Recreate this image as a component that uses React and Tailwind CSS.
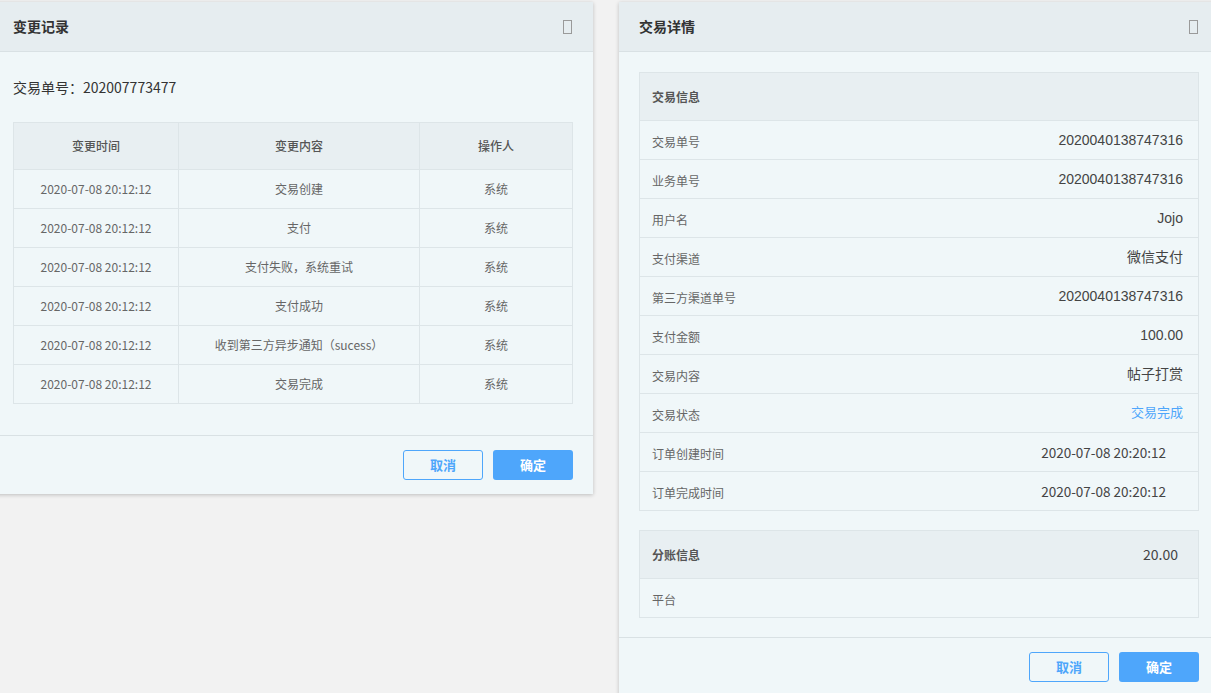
import React from "react";

const FONT = { fontFamily: '"Noto Sans CJK SC", "Liberation Sans", sans-serif' };

function CloseIcon() {
  return <div className="w-[9px] h-[14px] border border-[#9a9a9a]" />;
}

function Header({ title }) {
  return (
    <div className="h-[50px] flex items-center justify-between pl-[20px] pr-[21px] bg-[#e6edf0] border-b border-[#d9e1e4]">
      <span className="text-[14px] font-bold text-[#333]">{title}</span>
      <CloseIcon />
    </div>
  );
}

function Footer() {
  return (
    <div className="border-t border-[#d9e1e4] flex justify-end gap-[10px] pt-[14px] pb-[14px] pr-[20px]">
      <button className="w-[80px] h-[30px] rounded-[3px] border border-[#4ea6fb] text-[#4ea6fb] text-[13px] font-bold bg-[#f0f7f9]">取消</button>
      <button className="w-[80px] h-[30px] rounded-[3px] bg-[#4ea6fb] text-white text-[13px] font-bold">确定</button>
    </div>
  );
}

const records = [
  "交易创建",
  "支付",
  "支付失败，系统重试",
  "支付成功",
  "收到第三方异步通知（sucess）",
  "交易完成",
];

function LeftDialog() {
  return (
    <div className="w-[600px] shrink-0 -ml-[7px] mt-[2px] bg-[#f0f7f9] shadow-[0_1px_4px_rgba(0,0,0,0.22)]">
      <Header title="变更记录" />
      <div className="px-[20px] pt-[25px] pb-[31px]">
        <div className="text-[14px] leading-[20px] text-[#333]">交易单号：202007773477</div>
        <table className="mt-[25px] w-[560px] border-collapse text-[12px] text-[#666]">
          <thead>
            <tr className="h-[47px] bg-[#e8eff2] text-[#555]">
              <th className="w-[165px] border border-[#dde5e8] font-medium">变更时间</th>
              <th className="w-[241px] border border-[#dde5e8] font-medium">变更内容</th>
              <th className="border border-[#dde5e8] font-medium">操作人</th>
            </tr>
          </thead>
          <tbody>
            {records.map((r, i) => (
              <tr key={i} className="h-[39px]">
                <td className="border border-[#dde5e8] text-center">2020-07-08 20:12:12</td>
                <td className="border border-[#dde5e8] text-center">{r}</td>
                <td className="border border-[#dde5e8] text-center">系统</td>
              </tr>
            ))}
          </tbody>
        </table>
      </div>
      <Footer />
    </div>
  );
}

const details = [
  { l: "交易单号", v: "2020040138747316" },
  { l: "业务单号", v: "2020040138747316" },
  { l: "用户名", v: "Jojo" },
  { l: "支付渠道", v: "微信支付" },
  { l: "第三方渠道单号", v: "2020040138747316" },
  { l: "支付金额", v: "100.00" },
  { l: "交易内容", v: "帖子打赏" },
  { l: "交易状态", v: "交易完成", blue: true },
  { l: "订单创建时间", v: "2020-07-08 20:20:12", date: true },
  { l: "订单完成时间", v: "2020-07-08 20:20:12", date: true },
];

function Row({ l, v, blue, date }) {
  return (
    <div className="h-[39px] flex items-center justify-between pl-[12px] border-t border-[#dde5e8]">
      <span className="text-[12px] text-[#666] pt-[4px]">{l}</span>
      <span
        className={
          blue
            ? "text-[13px] text-[#4ea6fb] pr-[15px]"
            : date
            ? "text-[13.5px] text-[#444] pr-[32px]"
            : "text-[14px] text-[#444] pr-[15px]"
        }
        style={date ? FONT : { fontFamily: '"Liberation Sans", "Noto Sans CJK SC", sans-serif' }}
      >
        {v}
      </span>
    </div>
  );
}

function RightDialog() {
  return (
    <div className="w-[600px] shrink-0 mt-[2px] bg-[#f0f7f9] shadow-[0_1px_4px_rgba(0,0,0,0.22)]">
      <Header title="交易详情" />
      <div className="px-[20px] pt-[20px] pb-[19px]">
        <div className="border border-[#dde5e8]">
          <div className="h-[47px] flex items-center pl-[12px] bg-[#e8eff2] text-[12px] font-bold text-[#555]">交易信息</div>
          {details.map((d, i) => (
            <Row key={i} {...d} />
          ))}
        </div>
        <div className="mt-[19px] border border-[#dde5e8]">
          <div className="h-[47px] flex items-center justify-between pl-[12px] pr-[20px] bg-[#e8eff2]">
            <span className="text-[12px] font-bold text-[#555]">分账信息</span>
            <span className="text-[14px] text-[#444]">20.00</span>
          </div>
          <div className="h-[39px] flex items-center pl-[12px] border-t border-[#dde5e8]">
            <span className="text-[12px] text-[#666] pt-[4px]">平台</span>
          </div>
        </div>
      </div>
      <Footer />
    </div>
  );
}

export default function App() {
  return (
    <div className="w-[1211px] h-[693px] overflow-hidden bg-[#f2f2f2] flex items-start gap-[26px]" style={FONT}>
      <LeftDialog />
      <RightDialog />
    </div>
  );
}
